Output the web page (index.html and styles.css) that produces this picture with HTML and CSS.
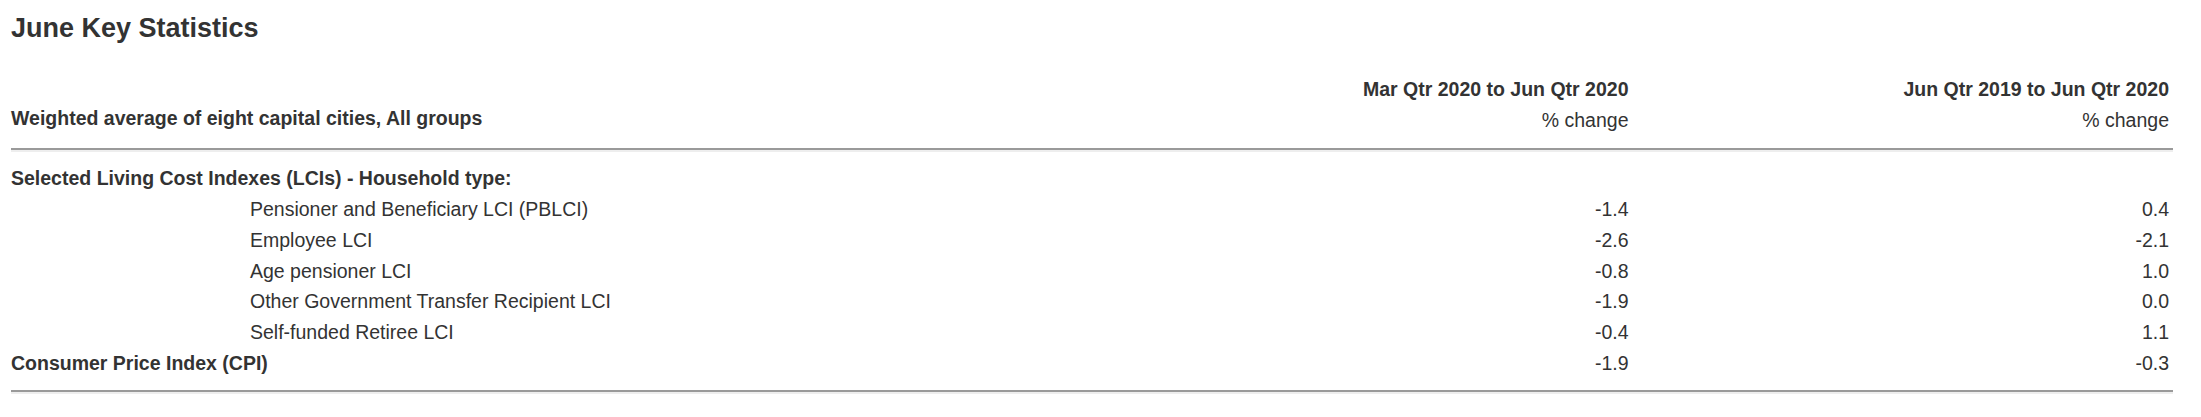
FILE: index.html
```html
<!DOCTYPE html>
<html lang="en">

<head>
    <meta charset="utf-8">
    <meta name="viewport" content="width=device-width, initial-scale=1.0">
    <title>June Key Statistics</title>

    <link rel="stylesheet" href="styles.css">

</head>

<body>

    <section class="stats">

        <h2>June Key Statistics</h2>

        <table class="key_table">
            <colgroup>
                <col class="col_label">
                <col class="col_value">
                <col class="col_value">
            </colgroup>
            <thead>
                <tr>
                    <th class="label" rowspan="2">Weighted average of eight capital cities, All groups</th>
                    <th class="num">Mar Qtr 2020 to Jun Qtr 2020</th>
                    <th class="num">Jun Qtr 2019 to Jun Qtr 2020</th>
                </tr>
                <tr class="units">
                    <td class="num">% change</td>
                    <td class="num">% change</td>
                </tr>
            </thead>
            <tbody>
                <tr class="first">
                    <th class="label" colspan="3">Selected Living Cost Indexes (LCIs) - Household type:</th>
                </tr>
                <tr>
                    <td class="sub">Pensioner and Beneficiary LCI (PBLCI)</td>
                    <td class="num">-1.4</td>
                    <td class="num">0.4</td>
                </tr>
                <tr>
                    <td class="sub">Employee LCI</td>
                    <td class="num">-2.6</td>
                    <td class="num">-2.1</td>
                </tr>
                <tr>
                    <td class="sub">Age pensioner LCI</td>
                    <td class="num">-0.8</td>
                    <td class="num">1.0</td>
                </tr>
                <tr>
                    <td class="sub">Other Government Transfer Recipient LCI</td>
                    <td class="num">-1.9</td>
                    <td class="num">0.0</td>
                </tr>
                <tr>
                    <td class="sub">Self-funded Retiree LCI</td>
                    <td class="num">-0.4</td>
                    <td class="num">1.1</td>
                </tr>
                <tr class="last">
                    <th class="label">Consumer Price Index (CPI)</th>
                    <td class="num">-1.9</td>
                    <td class="num">-0.3</td>
                </tr>
            </tbody>
        </table>

        <div class="rule_shadow"></div>

    </section>

</body></html>
```

FILE: styles.css
```css
html {
    background-color: white;
}

body {
    margin: 0;
    font-family: "Liberation Sans", Arial, sans-serif;
    color: #333;
}

.stats {
    padding: 0 28px 0 11px;
}

h2 {
    font-size: 27px;
    line-height: 30px;
    font-weight: bold;
    margin: 13px 0 31px;
}

.key_table {
    width: 100%;
    border-collapse: separate;
    border-spacing: 0;
    font-size: 19.5px;
    line-height: 22.9px;
}

.col_label {
    width: 50%;
}

.col_value {
    width: 25%;
}

.key_table th,
.key_table td {
    padding: 4px 4px 4px 0;
    vertical-align: bottom;
}

.key_table th {
    font-weight: bold;
}

.label {
    text-align: left;
}

.num {
    text-align: right;
    font-weight: normal;
}

thead th.num {
    font-weight: bold;
}

.units td {
    padding-bottom: 16px;
    border-bottom: 2px solid #9a9a9a;
}

thead th.label {
    padding-bottom: 18px;
    border-bottom: 2px solid #9a9a9a;
}

.first th {
    padding-top: 15px;
    border-top: 2px solid #eeeeee;
}

.sub {
    padding-left: 239px !important;
}

.last th,
.last td {
    padding-bottom: 15px;
    border-bottom: 2px solid #9a9a9a;
}

.rule_shadow {
    height: 2px;
    background-color: #eeeeee;
}
```
